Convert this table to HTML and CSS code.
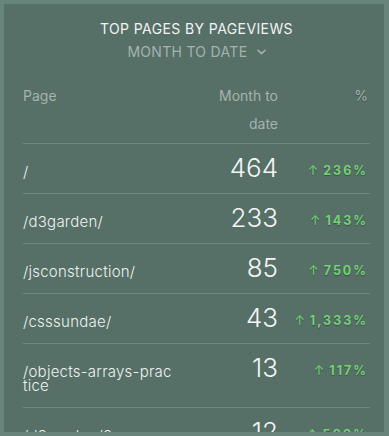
FILE: index.html
```html
<!DOCTYPE html>
<html>
<head>
<meta charset="utf-8">
<link rel="stylesheet" href="styles.css">
</head>
<body>
<div class="frame">
  <div class="panel">
    <div class="title">TOP PAGES BY PAGEVIEWS</div>
    <div class="subtitle">MONTH TO DATE
      <svg class="chev" width="9" height="6" viewBox="0 0 9 6"><path d="M1 1.2 L4.5 4.6 L8 1.2" fill="none" stroke="currentColor" stroke-width="1.5" stroke-linecap="round" stroke-linejoin="round"/></svg>
    </div>
    <div class="row head">
      <div class="c-page">Page</div>
      <div class="c-num">Month to<br>date</div>
      <div class="c-pct">%</div>
    </div>
    <div class="row">
      <div class="c-page">/</div>
      <div class="c-num">464</div>
      <div class="c-pct"><span class="arr">↑</span>236%</div>
    </div>
    <div class="row">
      <div class="c-page">/d3garden/</div>
      <div class="c-num">233</div>
      <div class="c-pct"><span class="arr">↑</span>143%</div>
    </div>
    <div class="row">
      <div class="c-page">/jsconstruction/</div>
      <div class="c-num">85</div>
      <div class="c-pct"><span class="arr">↑</span>750%</div>
    </div>
    <div class="row">
      <div class="c-page">/csssundae/</div>
      <div class="c-num">43</div>
      <div class="c-pct"><span class="arr">↑</span>1,333%</div>
    </div>
    <div class="row">
      <div class="c-page">/objects-arrays-practice</div>
      <div class="c-num">13</div>
      <div class="c-pct"><span class="arr">↑</span>117%</div>
    </div>
    <div class="row">
      <div class="c-page">/d3garden/2</div>
      <div class="c-num">12</div>
      <div class="c-pct"><span class="arr">↑</span>500%</div>
    </div>
  </div>
</div>
</body>
</html>
```
FILE: styles.css
```css
html, body {
  margin: 0;
  padding: 0;
}
body {
  font-family: Inter, "Noto Sans", sans-serif;
  background: #68857b;
}
.frame {
  box-sizing: border-box;
  width: 389px;
  height: 436px;
  padding: 4px 5px 4px 4px;
  background: #68857b;
}
.panel {
  box-sizing: border-box;
  height: 100%;
  overflow: hidden;
  background: #566f67;
  padding: 15px 14px 0 19px;
}
.title {
  text-align: center;
  font-size: 14px;
  line-height: 20px;
  letter-spacing: 0.4px;
  color: #f2f4f3;
}
.subtitle {
  margin-top: 3px;
  text-align: center;
  font-size: 14px;
  line-height: 20px;
  letter-spacing: 0.3px;
  color: #a4b4ae;
}
.chev {
  margin-left: 5px;
  vertical-align: 2px;
}
.row {
  display: grid;
  grid-template-columns: 152px 103px 88px;
  align-items: start;
  border-bottom: 1px solid #6b877e;
}
.row.head {
  margin-top: 20px;
  padding-bottom: 5px;
  color: #a4b4ae;
  font-size: 14px;
  line-height: 28px;
}
.row.head .c-num,
.row.head .c-pct {
  text-align: right;
}
.c-page {
  color: #eef2f0;
  font-size: 15px;
  font-weight: 300;
  letter-spacing: 0.25px;
  line-height: 14px;
  padding: 21px 0 14px;
  word-break: break-all;
}
.head .c-page,
.head .c-num,
.head .c-pct {
  color: #a4b4ae;
  font-size: 14px;
  font-weight: 400;
  letter-spacing: 0;
  line-height: 28px;
  padding: 0;
}
.c-num {
  text-align: right;
  color: #f4f6f5;
  font-size: 26px;
  font-weight: 300;
  line-height: 26px;
  padding-top: 11px;
}
.c-pct {
  text-align: right;
  color: #72d274;
  font-size: 12.5px;
  font-weight: 700;
  line-height: 14px;
  letter-spacing: 2px;
  margin-right: -2px;
  padding-top: 20px;
  text-shadow: 0 1px 1px rgba(0, 0, 0, 0.3);
}
.arr {
  font-weight: 400;
  margin-right: 5px;
  letter-spacing: 0;
}
```
